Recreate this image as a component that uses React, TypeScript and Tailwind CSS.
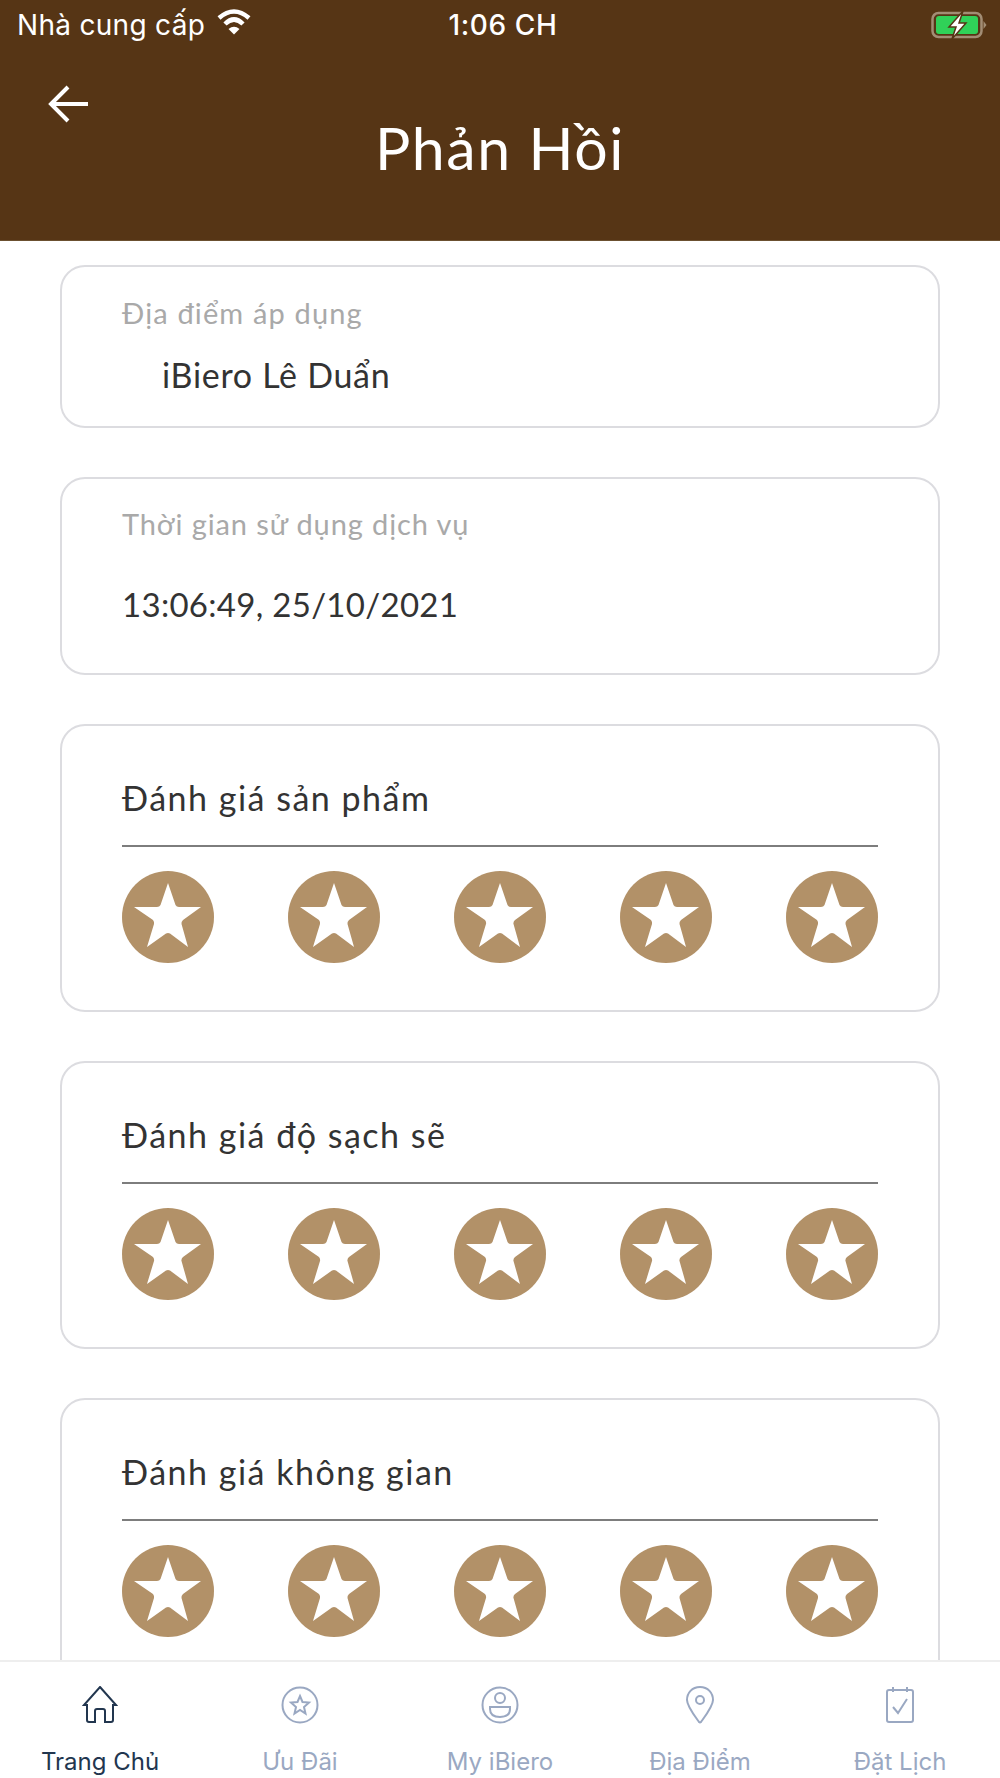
const geo = "font-['Lato','Noto_Sans',sans-serif]";

function Star() {
  return (
    <div className="flex h-[92px] w-[92px] items-center justify-center rounded-full bg-[#b29168]">
      <svg width="68" height="66" viewBox="0 0 68 66" fill="#fff" className="-mt-[2px]">
        <path d="M34 0 L41.5 22 Q42.5 24 45 24 L67 24 L49 37 Q47 39 47.5 41 L54 64 L36 50.5 Q34 49.5 32 50.5 L13 64 L20 41 Q20.5 39 19 37 L0 24 L23 24 Q25.5 24 26.5 22 Z" />
      </svg>
    </div>
  );
}

function RatingCard({ title, last }: { title: string; last?: boolean }) {
  return (
    <section className={`shrink-0 rounded-[25px] border-2 border-[#dcdce0] px-[60px] pt-[40px] ${last ? "h-[320px]" : "h-[288px]"}`}>
      <h2 className={`${geo} h-[79px] pt-[12px] text-[34px] leading-[40px] tracking-[1.5px] text-[#333333]`}>{title}</h2>
      <div className="h-[2px] bg-[#7d7d7d]" />
      <div className="mt-[24px] flex justify-between">
        <Star /><Star /><Star /><Star /><Star />
      </div>
    </section>
  );
}

function Tab({ label, active, children }: { label: string; active?: boolean; children: React.ReactNode }) {
  return (
    <div className="flex w-[200px] flex-col items-center">
      <div className="flex h-[38px] items-center justify-center">{children}</div>
      <span className={`mt-[23px] font-['Inter',sans-serif] text-[24px] leading-[30px] ${active ? "text-[#22364f]" : "text-[#9aa8c2]"}`}>{label}</span>
    </div>
  );
}

export default function App() {
  return (
    <div className="flex h-[1778px] w-[1000px] flex-col overflow-hidden bg-white">
      <header className="relative h-[241px] shrink-0 border-b border-[#6b5030] bg-[#563515] text-white">
        <div className="flex h-[50px] items-center justify-between pl-[17px] pr-[11px]">
          <div className="flex w-[290px] items-center gap-[11px] whitespace-nowrap font-['Inter',sans-serif] text-[28px] tracking-[0.3px]">
            <span>Nhà cung cấp</span>
            <svg width="36" height="28" viewBox="0 0 34 28" fill="none" stroke="#fff" strokeWidth="4.5" className="-mt-[6px] shrink-0">
              <path d="M2 10 Q17 -3 32 10" />
              <path d="M8 16 Q17 7 26 16" />
              <path d="M11.5 21 L17 26.5 L22.5 21 Q17 16.5 11.5 21 Z" fill="#fff" stroke="none" />
            </svg>
          </div>
          <span className="font-['Inter',sans-serif] text-[28px] font-medium tracking-[0.6px]">1:06 CH</span>
          <div className="flex w-[290px] justify-end">
            <svg width="60" height="28" viewBox="0 0 56 28">
              <rect x="1.5" y="2" width="49" height="24" rx="6" fill="none" stroke="#a28d74" strokeWidth="2.5" />
              <rect x="5" y="5" width="42" height="18" rx="3" fill="#30d158" />
              <path d="M52.5 10 L55.5 14 L52.5 18 Z" fill="#a28d74" />
              <path d="M32 0 L18 16 L25 16 L21 28 L35 12 L28 12 Z" fill="#fff" stroke="#563515" strokeWidth="1.5" />
            </svg>
          </div>
        </div>
        <svg width="42" height="40" viewBox="0 0 42 40" fill="none" stroke="#fff" strokeWidth="4" className="absolute left-[47px] top-[84px]">
          <path d="M21 3 L4 20 L21 37" />
          <path d="M4 20 L41 20" />
        </svg>
        <h1 className={`${geo} absolute inset-x-0 top-[112px] text-center text-[59px] leading-[72px] tracking-[1.6px]`}>Phản Hồi</h1>
      </header>

      <main className="flex min-h-0 flex-1 flex-col gap-[49px] overflow-hidden px-[60px] pt-[24px]">
        <section className="h-[163px] shrink-0 rounded-[25px] border-2 border-[#dcdce0] pl-[60px] pt-[28px]">
          <p className={`${geo} text-[29px] leading-[36px] tracking-[1.15px] text-[#a9a9a9]`}>Địa điểm áp dụng</p>
          <p className={`${geo} mt-[24px] pl-[40px] text-[34px] leading-[40px] tracking-[0.7px] text-[#333333]`}>iBiero Lê Duẩn</p>
        </section>
        <section className="h-[198px] shrink-0 rounded-[25px] border-2 border-[#dcdce0] pl-[60px] pt-[27px]">
          <p className={`${geo} text-[29px] leading-[36px] tracking-[0.9px] text-[#a9a9a9]`}>Thời gian sử dụng dịch vụ</p>
          <p className={`${geo} mt-[42px] text-[33px] leading-[40px] tracking-[0.3px] text-[#333333]`}>13:06:49, 25/10/2021</p>
        </section>
        <RatingCard title="Đánh giá sản phẩm" />
        <RatingCard title="Đánh giá độ sạch sẽ" />
        <RatingCard title="Đánh giá không gian" last />
      </main>

      <nav className="flex h-[118px] shrink-0 border-t-2 border-[#eeeeee] bg-white pt-[24px]">
        <Tab label="Trang Chủ" active>
          <svg width="36" height="38" viewBox="0 0 36 38" fill="none" stroke="#22364f" strokeWidth="2">
            <path d="M18 1 L34 19 L31 19 L31 34 Q31 36 29 36 L23 36 L23 25 Q23 23 21 23 L15 23 Q13 23 13 25 L13 36 L7 36 Q5 36 5 34 L5 19 L2 19 Z" />
          </svg>
        </Tab>
        <Tab label="Ưu Đãi">
          <svg width="38" height="38" viewBox="0 0 38 38" fill="none" stroke="#9aa8c2" strokeWidth="2">
            <circle cx="19" cy="19" r="17.5" />
            <path d="M19 10 L21.5 16 L28 16.5 L23 21 L24.5 27.5 L19 24 L13.5 27.5 L15 21 L10 16.5 L16.5 16 Z" />
          </svg>
        </Tab>
        <Tab label="My iBiero">
          <svg width="38" height="38" viewBox="0 0 38 38" fill="none" stroke="#9aa8c2" strokeWidth="2">
            <circle cx="19" cy="19" r="17.5" />
            <circle cx="19" cy="12" r="5" />
            <path d="M9 21 L29 21 L29 23 Q29 31 19 31 Q9 31 9 23 Z" />
          </svg>
        </Tab>
        <Tab label="Địa Điểm">
          <svg width="30" height="38" viewBox="0 0 30 38" fill="none" stroke="#9aa8c2" strokeWidth="2">
            <path d="M15 1 C7 1 2 7 2 14 C2 20 9 29 14 36 Q15 37 16 36 C21 29 28 20 28 14 C28 7 23 1 15 1 Z" />
            <circle cx="15" cy="14" r="4" />
          </svg>
        </Tab>
        <Tab label="Đặt Lịch">
          <svg width="30" height="38" viewBox="0 0 30 38" fill="none" stroke="#9aa8c2" strokeWidth="2">
            <rect x="2" y="4" width="26" height="32" rx="2" />
            <path d="M8 1 L8 6 M22 1 L22 6" />
            <path d="M8 21 L13 27 L22 13" />
          </svg>
        </Tab>
      </nav>
    </div>
  );
}
